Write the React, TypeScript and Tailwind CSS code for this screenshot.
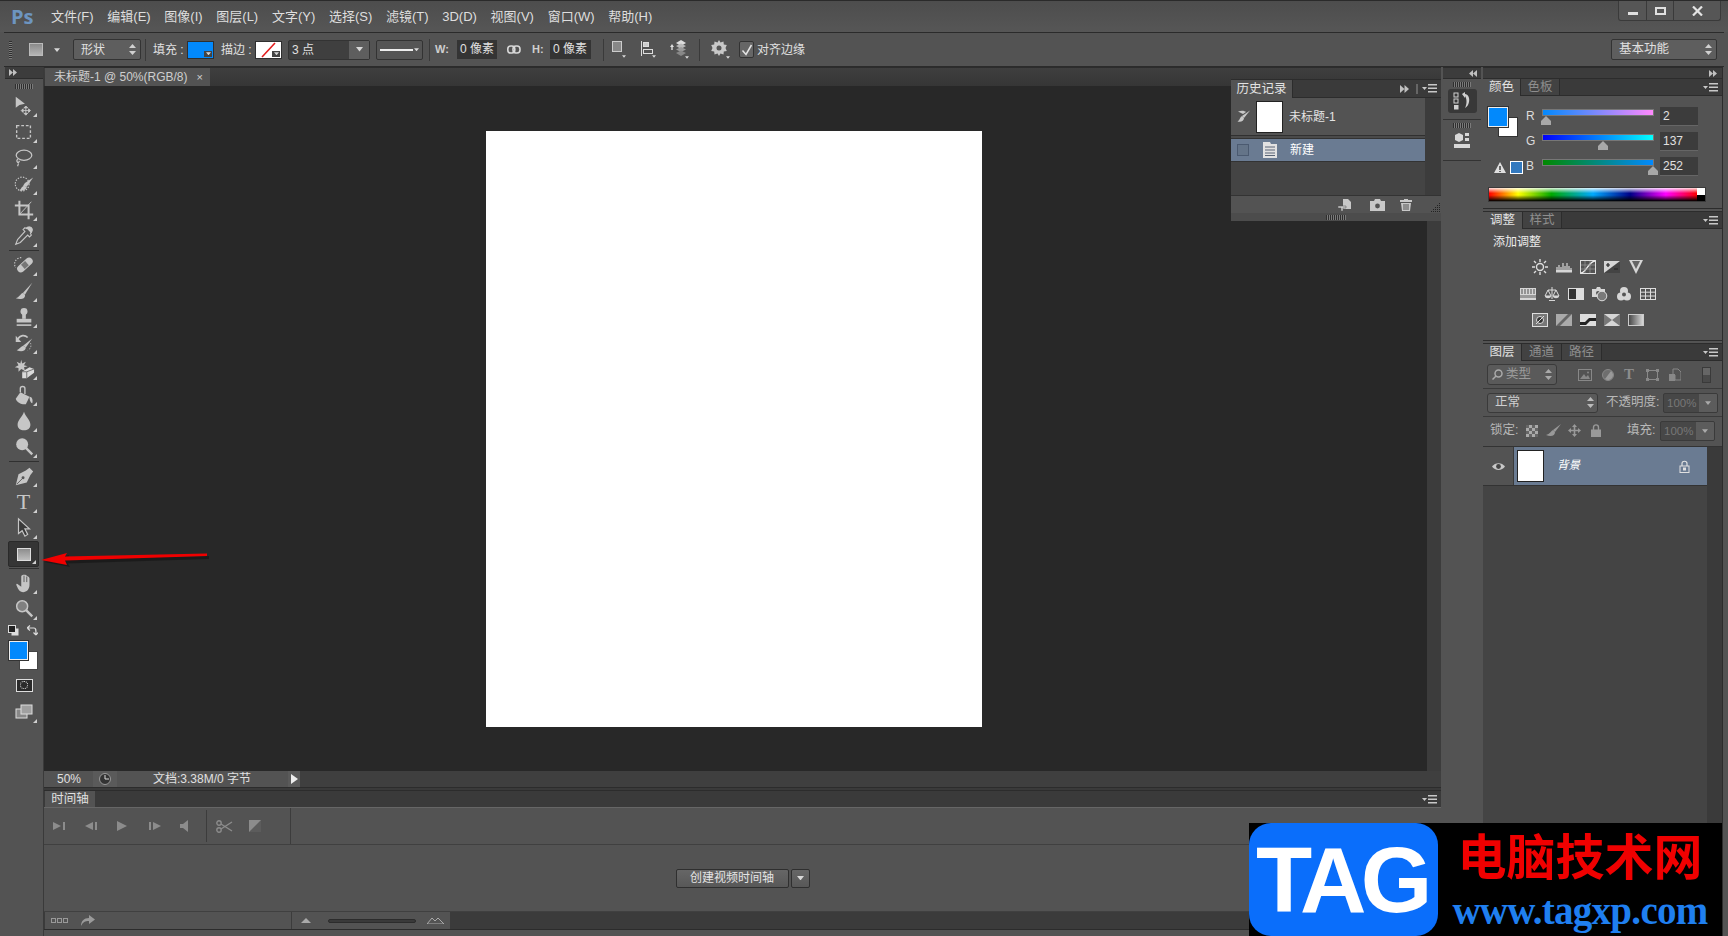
import React from "react";

const C = "#c6c6c6";

function Caret() {
  return <span className="absolute right-[2px] bottom-[2px] w-0 h-0 border-l-[4px] border-l-transparent border-b-[4px] border-b-[#d0d0d0]" />;
}

function Tool({ children, active, noCaret }: { children: React.ReactNode; active?: boolean; noCaret?: boolean }) {
  return (
    <div className={"relative mx-[3px] h-[26px] w-[31px] flex items-center justify-center rounded-[2px] " + (active ? "bg-[#353535] border border-[#2a2a2a]" : "")}>
      {children}
      {!noCaret && <Caret />}
    </div>
  );
}

function Ico({ children, s = 22, v = 24 }: { children: React.ReactNode; s?: number; v?: number }) {
  return (
    <svg width={s} height={s} viewBox={`0 0 ${v} ${v}`} fill={C} stroke="none">
      {children}
    </svg>
  );
}

function Sep() {
  return (
    <div className="h-[3px] flex items-center px-[4px]">
      <div className="h-px w-full bg-[#303030]" />
    </div>
  );
}

function Grip({ w = 22 }: { w?: number }) {
  return <div style={{ width: w }} className="h-[5px] bg-[repeating-linear-gradient(90deg,#2e2e2e_0_1px,#7a7a7a_1px_2px)]" />;
}

function UpDown({ c = "#d0d0d0" }: { c?: string }) {
  return (
    <svg width="7" height="11" viewBox="0 0 7 11" fill={c}>
      <path d="M3.5 0L7 4H0Z" />
      <path d="M3.5 11L0 7H7Z" />
    </svg>
  );
}

function Down({ c = "#d8d8d8", w = 7 }: { c?: string; w?: number }) {
  return (
    <svg width={w} height={w / 2 + 1} viewBox="0 0 8 5" fill={c}>
      <path d="M0 0H8L4 5Z" />
    </svg>
  );
}

function PanelMenu() {
  return (
    <svg width="15" height="9" viewBox="0 0 15 9" fill="#c8c8c8">
      <path d="M0 3H5L2.5 6Z" />
      <rect x="6" y="0" width="9" height="1.5" />
      <rect x="6" y="3.5" width="9" height="1.5" />
      <rect x="6" y="7" width="9" height="1.5" />
    </svg>
  );
}

function DoubleArrow({ left, s = 8 }: { left?: boolean; s?: number }) {
  return (
    <svg width={s} height={s - 1} viewBox="0 0 8 7" fill="#c0c0c0">
      {left ? <path d="M4 0V7L0 3.5ZM8 0V7L4 3.5Z" /> : <path d="M0 0V7L4 3.5ZM4 0V7L8 3.5Z" />}
    </svg>
  );
}

function Tabs({ tabs }: { tabs: [string, number][] }) {
  return (
    <div className="h-[17px] flex items-stretch bg-[#3a3a3a] border-b border-[#2c2c2c] shrink-0">
      {tabs.map(([t, w], i) => (
        <div
          key={t}
          style={{ width: w }}
          className={
            "flex items-center justify-center text-[12.5px] border-r border-[#2c2c2c] " +
            (i === 0 ? "bg-[#535353] text-[#e2e2e2] -mb-px" : "bg-[#424242] text-[#8e8e8e]")
          }
        >
          {t}
        </div>
      ))}
      <div className="flex-1 flex items-center justify-end pr-[4px]">
        <PanelMenu />
      </div>
    </div>
  );
}

function Slider({ label, grad, pos, value }: { label: string; grad: string; pos: number; value: string }) {
  return (
    <div className="h-[25px] flex items-start">
      <div className="w-[16px] pt-[1px] text-[12px] text-[#dcdcdc] leading-[16px]">{label}</div>
      <div className="relative w-[112px] mt-[2px]">
        <div className={"h-[7px] border border-[#777] " + grad} />
        <svg className="absolute top-[7px]" style={{ left: pos - 5 }} width="10" height="9" viewBox="0 0 10 9" fill="#a8a8a8">
          <path d="M5 0L10 5V9H0V5Z" />
        </svg>
      </div>
      <div className="ml-[6px] w-[38px] h-[19px] bg-[#3c3c3c] border-b border-[#666] text-[12px] text-[#e0e0e0] pl-[3px] leading-[19px]">{value}</div>
    </div>
  );
}

function Adj({ children }: { children: React.ReactNode }) {
  return (
    <svg width="16" height="16" viewBox="0 0 16 16" fill="#d6d6d6" stroke="none">
      {children}
    </svg>
  );
}

const boxBg = <rect x="0.5" y="1.5" width="15" height="13" fill="none" stroke="#dedede" />;

const TOP_TOOLS = [
  <Ico key="m"><path d="M3 2V14L7 11L13 9.5Z" /><path d="M14 13V21M10 17H18M14 12L16 14H12ZM14 22L16 20H12ZM9 17L11 15V19ZM19 17L17 15V19Z" stroke={C} strokeWidth="1" /></Ico>,
  <Ico key="mq"><rect x="4" y="5" width="15" height="14" fill="none" stroke={C} strokeWidth="1.5" strokeDasharray="3 2" /></Ico>,
  <Ico key="la"><ellipse cx="12" cy="9" rx="8.5" ry="5.5" fill="none" stroke={C} strokeWidth="1.4" /><path d="M5 13C3 16 6 19 7 15M6 18L5 21" fill="none" stroke={C} strokeWidth="1.3" /></Ico>,
  <Ico key="qs"><circle cx="10" cy="12" r="7.5" fill="none" stroke={C} strokeWidth="1.3" strokeDasharray="1.5 1.5" /><path d="M22 5L13 11L11 14L15 15Z" /><path d="M12 14C9 15 9 18 7 19C11 20 15 18 15 15Z" /></Ico>,
  <Ico key="cr"><path d="M7 2V17H22M2 7H17V22" fill="none" stroke={C} strokeWidth="2.2" /><path d="M7 17L20 3" stroke={C} strokeWidth="1" /></Ico>,
  <Ico key="ey"><path d="M20 3C18 1 16 3 15 4L13 3L11 5L13 7L5 16L3 21L8 19L16 11L18 13L20 11L19 9C20 8 22 5 20 3Z" fill="none" stroke={C} strokeWidth="1.2" /><path d="M14 3L20 9C22 6 22 4 20 3C18 1 16 1 14 3Z" /></Ico>,
];

const MID_TOOLS = [
  <Ico key="he"><g transform="rotate(-42 13 12)"><rect x="3" y="8" width="20" height="8" rx="4" /><rect x="10" y="9" width="6" height="6" fill="#777" /></g><path d="M9 4A7 7 0 0 0 3 15" fill="none" stroke={C} strokeWidth="1.2" strokeDasharray="1.5 1.5" /></Ico>,
  <Ico key="br"><path d="M21 3L11 14L13 16Z" /><path d="M11 14C8 15 7 19 3 20C9 22 14 20 13 16Z" /></Ico>,
  <Ico key="st"><circle cx="12" cy="6" r="3.8" /><rect x="10" y="8" width="4" height="6" /><rect x="4" y="14" width="16" height="4" /><rect x="4" y="20" width="16" height="1.7" /></Ico>,
  <Ico key="hb"><path d="M5 8C8 3 13 3 16 6" fill="none" stroke={C} strokeWidth="1.8" /><path d="M3 4V11H9Z" /><path d="M21 7L11 15L14 17Z" /><path d="M11 15C8 16 7 19 4 20C9 22 14 21 14 17Z" /><path d="M19 12A6 6 0 0 1 16 20" fill="none" stroke={C} strokeDasharray="1.5 1.5" /></Ico>,
  <Ico key="er"><path d="M9 2L10 6L14 4L12 8L16 9L12 10L13 14L9 12L6 15L6 11L2 10L6 8L4 4L8 6Z" /><path d="M10 15L18 10L23 12V16L15 22H10Z" fill="#dadada" /><path d="M10 15H15V22M15 15L23 12" fill="none" stroke="#6a6a6a" /></Ico>,
  <Ico key="bu"><path d="M8 9L18 14L14 22C10 23 4 20 3 16Z" /><path d="M8 9V5C8 2 13 2 13 5V11" fill="none" stroke={C} strokeWidth="1.5" /><path d="M18 14C21 14 22 18 21 21C19 21 18 17 18 14Z" /></Ico>,
  <Ico key="bl"><path d="M12 2C10 8 5 11 5 16C5 20 8 22 12 22C16 22 19 20 19 16C19 11 14 8 12 2Z" /></Ico>,
  <Ico key="do"><circle cx="10" cy="9" r="6.5" /><path d="M14 13L21 20" stroke={C} strokeWidth="2.6" /></Ico>,
];

const LOW_TOOLS = [
  <Ico key="pe"><path d="M18 3L22 7L19 11L15 19L3 22L6 10L14 6Z" /><circle cx="11" cy="14" r="1.6" fill="#555" /><path d="M4 21L11 14" stroke="#555" /></Ico>,
  <span key="t" className="font-['Liberation_Serif',serif] text-[22px] leading-none text-[#c6c6c6]">T</span>,
  <Ico key="pa"><path d="M6 2V18L10 15L13 21L16 19L13 13H18Z" fill="#3a3a3a" stroke={C} strokeWidth="1.3" /></Ico>,
];

function Toolbar() {
  return (
    <div className="w-[39px] ml-[5px] shrink-0 bg-[#535353] border-r border-[#3a3a3a] flex flex-col">
      <div className="h-[12px] bg-[#3c3c3c] border-b border-[#2c2c2c] flex items-center pl-[4px]">
        <DoubleArrow />
      </div>
      <div className="h-[14px] flex items-center justify-center">
        <Grip w={18} />
      </div>
      {TOP_TOOLS.map((t, i) => <Tool key={i} noCaret={false}>{t}</Tool>)}
      <Sep />
      {MID_TOOLS.map((t, i) => <Tool key={i}>{t}</Tool>)}
      <Sep />
      {LOW_TOOLS.map((t, i) => <Tool key={i}>{t}</Tool>)}
      <Tool active>
        <div className="w-[14px] h-[13px] border border-[#ddd] bg-[linear-gradient(180deg,#8d8d8d,#bdbdbd)]" />
      </Tool>
      <Sep />
      <Tool>
        <Ico><path d="M9 5V13M12 3V12M15 4V12M18 7V14C18 19 15 22 11 22C8 22 6 20 4 15C3 13 4 12 6 14L9 16V5C9 3 12 3 12 3C12 3 15 3 15 4C15 4 18 5 18 7Z" /><path d="M12 4V11M15 5V11" stroke="#555" /></Ico>
      </Tool>
      <Tool>
        <Ico><circle cx="10" cy="9" r="6" fill="#808080" stroke={C} strokeWidth="1.6" /><path d="M14 13L21 20" stroke={C} strokeWidth="2.6" /></Ico>
      </Tool>
      <div className="h-[17px] flex items-center gap-[8px] pl-[3px]">
        <svg width="11" height="11" viewBox="0 0 11 11"><rect x="3.5" y="3.5" width="7" height="7" fill="#ddd" /><rect x="0.5" y="0.5" width="7" height="7" fill="#222" stroke="#ddd" /></svg>
        <svg width="11" height="11" viewBox="0 0 11 11" fill="none" stroke="#ddd" strokeWidth="1.2"><path d="M1 3H7C9 3 9 5 9 9M0 3L3 0.5M0 3L3 5.5M9 10L6.5 7.5M9 10L11 7.5" /></svg>
      </div>
      <div className="relative h-[32px]">
        <div className="absolute left-[14px] top-[12px] w-[19px] h-[19px] bg-white border border-[#444]" />
        <div className="absolute left-[4px] top-[2px] w-[19px] h-[19px] bg-[#0289fc] border border-[#eee] outline outline-[#333]" />
      </div>
      <div className="h-[28px] flex items-center justify-center">
        <div className="w-[17px] h-[13px] border border-[#ddd] bg-[#2a2a2a] flex items-center justify-center">
          <div className="w-[8px] h-[8px] rounded-full border border-dotted border-[#eee]" />
        </div>
      </div>
      <Tool>
        <svg width="18" height="16" viewBox="0 0 18 16"><rect x="1" y="5" width="11" height="9" fill="#888" stroke="#ddd" /><rect x="6" y="1" width="11" height="9" fill="#a0a0a0" stroke="#ddd" /></svg>
      </Tool>
    </div>
  );
}

function OptSwatch({ red }: { red?: boolean }) {
  return (
    <div className={"relative w-[27px] h-[18px] border border-[#2f2f2f] " + (red ? "bg-white" : "bg-[#0289fc]")}>
      {red && (
        <svg className="absolute inset-0" width="25" height="16" viewBox="0 0 25 16">
          <path d="M6 15L19 1" stroke="#e21d1d" strokeWidth="1.6" />
        </svg>
      )}
      <span className="absolute right-[1px] bottom-[1px] flex items-center justify-center w-[8px] h-[6px] bg-[#444]">
        <Down w={5} />
      </span>
    </div>
  );
}

function OptionsBar() {
  return (
    <div className="h-[35px] mx-[4px] border-y border-[#2b2b2b] bg-[#535353] flex items-center text-[12px] text-[#e0e0e0] shrink-0">
      <div className="ml-[5px] w-[3px] h-[18px] bg-[repeating-linear-gradient(180deg,#2e2e2e_0_1px,#7a7a7a_1px_2px)]" />
      <div className="ml-[17px] w-[14px] h-[13px] border border-[#bbb] bg-[linear-gradient(180deg,#8a8a8a,#b5b5b5)]" />
      <div className="ml-[11px]"><Down w={6} /></div>
      <div className="ml-[13px] w-[68px] h-[21px] rounded-[2px] border border-[#333] bg-[#5e5e5e] flex items-center justify-between pl-[7px] pr-[4px]">
        <span className="text-[12px]">形状</span>
        <UpDown />
      </div>
      <div className="ml-[4px] w-px h-[22px] bg-[#3a3a3a]" />
      <span className="ml-[7px] w-[34px]">填充 :</span>
      <OptSwatch />
      <span className="ml-[7px] w-[34px]">描边 :</span>
      <OptSwatch red />
      <div className="ml-[6px] w-[82px] h-[20px] border border-[#333] bg-[#3f3f3f] flex items-center pl-[3px] rounded-[2px]">
        <span className="flex-1">3 点</span>
        <div className="w-[20px] h-full bg-[#5e5e5e] flex items-center justify-center"><Down /></div>
      </div>
      <div className="ml-[6px] w-[47px] h-[20px] border border-[#333] bg-[#555] rounded-[2px] flex items-center pl-[3px] pr-[3px] gap-[1px]">
        <div className="flex-1 h-[2px] bg-[#eee]" />
        <Down w={5} />
      </div>
      <div className="ml-[6px] w-px h-[22px] bg-[#3a3a3a]" />
      <span className="ml-[5px] w-[22px] text-[#cfcfcf] font-bold text-[11px]">W:</span>
      <div className="w-[40px] h-[19px] bg-[#343434] pl-[3px] leading-[19px]">0 像素</div>
      <svg className="ml-[10px]" width="14" height="9" viewBox="0 0 14 9" fill="none" stroke="#d8d8d8" strokeWidth="1.6">
        <rect x="0.8" y="1" width="7" height="7" rx="3" />
        <rect x="6" y="1" width="7" height="7" rx="3" />
      </svg>
      <span className="ml-[11px] w-[18px] text-[#cfcfcf] font-bold text-[11px]">H:</span>
      <div className="w-[41px] h-[19px] bg-[#343434] pl-[3px] leading-[19px]">0 像素</div>
      <div className="ml-[12px] w-px h-[22px] bg-[#3a3a3a]" />
      <div className="relative ml-[8px] w-[14px] h-[17px]">
        <div className="w-[10px] h-[11px] border border-[#ccc] bg-[#888]" />
        <div className="absolute right-0 bottom-0"><Down w={4} /></div>
      </div>
      <div className="relative ml-[15px] w-[15px] h-[17px]">
        <svg width="13" height="15" viewBox="0 0 13 15" fill="none" stroke="#ddd"><path d="M0.5 0V15" /><rect x="2.5" y="1.5" width="5" height="4" fill="#ccc" /><rect x="2.5" y="8.5" width="9" height="4" /></svg>
        <div className="absolute right-0 bottom-0"><Down w={4} /></div>
      </div>
      <div className="relative ml-[13px] w-[20px] h-[19px]">
        <svg width="18" height="18" viewBox="0 0 18 18" fill="#b8b8b8">
          <path d="M1 7L3 4L5 7H3.7V10H2.3V7Z" fill="#ddd" />
          <path d="M7 3L12 0L17 3L12 6Z" fill="#ddd" />
          <path d="M7 6L12 3.5L17 6L12 9Z" />
          <path d="M7 9.5L12 7L17 9.5L12 12Z" fill="#999" />
          <path d="M7 13L12 10.5L17 13L12 16Z" fill="#888" />
        </svg>
        <div className="absolute right-0 bottom-0"><Down w={4} /></div>
      </div>
      <div className="ml-[10px] w-px h-[22px] bg-[#3a3a3a]" />
      <div className="relative ml-[11px] w-[19px] h-[19px]">
        <svg width="16" height="16" viewBox="0 0 16 16" fill="#c8c8c8">
          <path d="M8 0L9.5 2.5L12.5 1.5L12.8 4.5L15.8 5L14.5 8L15.8 11L12.8 11.5L12.5 14.5L9.5 13.5L8 16L6.5 13.5L3.5 14.5L3.2 11.5L0.2 11L1.5 8L0.2 5L3.2 4.5L3.5 1.5L6.5 2.5Z" />
          <circle cx="8" cy="8" r="2.5" fill="#555" />
        </svg>
        <div className="absolute right-0 bottom-0"><Down w={4} /></div>
      </div>
      <div className="ml-[9px] w-[15px] h-[17px] border border-[#333] bg-[#666] rounded-[2px] flex items-center justify-center">
        <svg width="12" height="12" viewBox="0 0 12 12" fill="none" stroke="#e4e4e4" strokeWidth="1.5"><path d="M1.5 6.5L5 10.5L10.5 1" /></svg>
      </div>
      <span className="ml-[3px] text-[12px]">对齐边缘</span>
      <div className="ml-auto mr-[7px] w-[106px] h-[21px] rounded-[2px] border border-[#333] bg-[#5e5e5e] flex items-center justify-between pl-[7px] pr-[4px] text-[12.5px]">
        <span>基本功能</span>
        <UpDown />
      </div>
    </div>
  );
}

function MenuBar() {
  const items = ["文件(F)", "编辑(E)", "图像(I)", "图层(L)", "文字(Y)", "选择(S)", "滤镜(T)", "3D(D)", "视图(V)", "窗口(W)", "帮助(H)"];
  return (
    <div className="h-[32px] bg-[linear-gradient(180deg,#4d4d4d,#565656)] border-t border-[#2a2a2a] flex items-start shrink-0">
      <span className="ml-[11px] mt-[4px] w-[21px] text-[#6d95c0] font-bold text-[20px] leading-[24px] font-['Open_Sans',sans-serif]">Ps</span>
      <div className="ml-[19px] flex gap-[13.7px] mt-[7px] text-[13px] leading-[18px] text-[#dedede]">
        {items.map((m) => <span key={m}>{m}</span>)}
      </div>
      <div className="ml-auto mr-[7px] w-[103px] h-[20px] flex border border-t-0 border-[#3a3a3a] rounded-b-[3px] bg-[#565656]">
        <div className="w-[28px] flex items-center justify-center border-r border-[#3a3a3a]">
          <div className="w-[10px] h-[3px] mt-[6px] bg-[#e0e0e0]" />
        </div>
        <div className="w-[27px] flex items-center justify-center border-r border-[#3a3a3a]">
          <div className="w-[11px] h-[8px] border-2 border-[#e0e0e0]" />
        </div>
        <div className="flex-1 flex items-center justify-center">
          <svg width="11" height="10" viewBox="0 0 11 10" stroke="#e4e4e4" strokeWidth="2.2"><path d="M1 0.5L10 9.5M10 0.5L1 9.5" /></svg>
        </div>
      </div>
    </div>
  );
}

function HistoryPanel() {
  return (
    <div className="absolute right-0 top-[12px] w-[210px] h-[142px] flex flex-col bg-[#535353] border-t border-[#2c2c2c] z-10">
      <div className="h-[18px] bg-[#3a3a3a] border-b border-[#2c2c2c] flex items-stretch shrink-0">
        <div className="w-[62px] bg-[#535353] -mb-px border-r border-[#2c2c2c] text-[12.5px] text-[#e2e2e2] flex items-center justify-center">历史记录</div>
        <div className="flex-1 flex items-center justify-end pr-[4px]">
          <DoubleArrow s={9} />
          <div className="ml-[7px] w-[2px] h-[10px] bg-[#666]" />
          <div className="ml-[4px]"><PanelMenu /></div>
        </div>
      </div>
      <div className="flex-1 flex min-h-0">
        <div className="flex-1 flex flex-col">
          <div className="h-[38px] flex items-center border-b border-[#303030] text-[12px] text-[#e4e4e4]">
            <svg className="ml-[6px]" width="14" height="13" viewBox="0 0 14 13" fill="#c8c8c8">
              <path d="M13 0.5L5 6L7 8Z" /><path d="M1 1.5C5 0 8 1 9 2L6 4ZM5 6C3 7 3 10 0.5 11.5C4 12.5 7 11 7 8Z" />
            </svg>
            <div className="ml-[5px] w-[27px] h-[32px] bg-white border border-[#222]" />
            <span className="ml-[6px]">未标题-1</span>
          </div>
          <div className="h-[3px] bg-[#4a4a4a] border-b border-[#333]" />
          <div className="h-[23px] bg-[#6a7b92] border-b border-[#333] flex items-center text-[12px] text-white">
            <div className="ml-[6px] w-[12px] h-[12px] border border-[#4b5a70] bg-[#647488]" />
            <svg className="ml-[14px]" width="14" height="16" viewBox="0 0 14 16" fill="#e2e2e2">
              <path d="M0 0H7L8 2H14V16H0Z" />
              <path d="M2 5H12M2 8H12M2 11H12M2 13.5H12" stroke="#5a6576" />
            </svg>
            <span className="ml-[13px]">新建</span>
          </div>
          <div className="flex-1 bg-[#444]" />
        </div>
        <div className="w-[16px] bg-[#3c3c3c]" />
      </div>
      <div className="relative h-[18px] bg-[#535353] border-t border-[#333] flex items-center justify-end shrink-0">
        <svg width="14" height="12" viewBox="0 0 14 12" fill="#c8c8c8"><path d="M5 0H10L13 3V10H5Z" /><path d="M0 7H8V9H5V12H3V9H0Z" stroke="#535353" strokeWidth="0.5" /></svg>
        <svg className="ml-[18px]" width="15" height="12" viewBox="0 0 15 12" fill="#c8c8c8"><path d="M0 2H4L5 0H10L11 2H15V12H0Z" /><circle cx="7.5" cy="7" r="2.4" fill="#535353" /></svg>
        <svg className="ml-[15px] mr-[29px]" width="12" height="12" viewBox="0 0 12 12" fill="#c8c8c8"><path d="M4 0H8V1H12V3H0V1H4Z" /><path d="M1 4H11L10 12H2Z" /><path d="M4 5V11M6 5V11M8 5V11" stroke="#535353" /></svg>
        <svg className="absolute right-[1px] bottom-[1px]" width="9" height="9" viewBox="0 0 9 9" fill="#222"><path d="M8 0h1v1H8zM6 2h1v1H6zM8 2h1v1H8zM4 4h1v1H4zM6 4h1v1H6zM8 4h1v1H8zM2 6h1v1H2zM4 6h1v1H4zM6 6h1v1H6zM8 6h1v1H8zM0 8h1v1H0zM2 8h1v1H2zM4 8h1v1H4zM6 8h1v1H6zM8 8h1v1H8z" /></svg>
      </div>
      <div className="h-[8px] bg-[#4c4c4c] flex items-center justify-center shrink-0"><Grip w={20} /></div>
    </div>
  );
}

function Center() {
  return (
    <div className="relative w-[1397px] pb-[6px] flex flex-col shrink-0">
      <div className="h-[19px] bg-[linear-gradient(180deg,#3f3f3f,#363636)] border-t border-[#2c2c2c] flex shrink-0">
        <div className="ml-px w-[165px] bg-[#535353] flex items-center text-[12px] text-[#cfcfcf] pl-[9px]">
          <span className="flex-1">未标题-1 @ 50%(RGB/8)</span>
          <span className="mr-[7px] text-[11px] leading-none">×</span>
        </div>
      </div>
      <div className="flex-1 flex min-h-0">
        <div className="flex-1 bg-[#282828] flex items-center justify-center pr-[3px]">
          <div className="w-[496px] h-[596px] bg-white" />
        </div>
        <div className="w-[14px] bg-[#3c3c3c]" />
      </div>
      <div className="h-[17px] flex bg-[#3f3f3f] border-b border-[#2c2c2c] text-[12px] text-[#e0e0e0] shrink-0">
        <div className="w-[49px] bg-[#535353] flex items-center pl-[13px]">50%</div>
        <div className="w-[24px] bg-[#5a5a5a] flex items-center justify-center">
          <svg width="12" height="12" viewBox="0 0 12 12"><circle cx="6" cy="6" r="5.5" fill="#333" stroke="#999" /><path d="M6 2V6H10" fill="none" stroke="#ddd" /></svg>
        </div>
        <div className="w-[171px] bg-[#535353] flex items-center pl-[36px]">文档:3.38M/0 字节</div>
        <div className="w-[12px] bg-[#5a5a5a] flex items-center justify-center">
          <svg width="7" height="10" viewBox="0 0 7 10" fill="#eee"><path d="M0 0L7 5L0 10Z" /></svg>
        </div>
      </div>
      <div className="h-[2px] bg-[#3a3a3a] shrink-0" />
      <div className="h-[17px] flex bg-[#3a3a3a] border-t border-[#2c2c2c] shrink-0">
        <div className="ml-px w-[50px] bg-[#535353] text-[12.5px] text-[#e0e0e0] flex items-center justify-center">时间轴</div>
        <div className="flex-1 flex items-center justify-end pr-[4px]"><PanelMenu /></div>
      </div>
      <div className="h-[37px] bg-[#535353] border-t border-[#666] flex items-center shrink-0">
        <svg className="ml-[9px]" width="12" height="10" viewBox="0 0 12 10" fill="#8c8c8c"><path d="M0 1L8 5L0 9ZM10 1H12V9H10Z" /></svg>
        <svg className="ml-[20px]" width="12" height="10" viewBox="0 0 12 10" fill="#8c8c8c"><path d="M8 1L0 5L8 9ZM10 1H12V9H10Z" /></svg>
        <svg className="ml-[20px]" width="10" height="10" viewBox="0 0 10 10" fill="#8c8c8c"><path d="M0 0L10 5L0 10Z" /></svg>
        <svg className="ml-[22px]" width="12" height="10" viewBox="0 0 12 10" fill="#8c8c8c"><path d="M0 1H2V9H0ZM4 1L12 5L4 9Z" /></svg>
        <svg className="ml-[19px]" width="8" height="12" viewBox="0 0 8 12" fill="#8c8c8c"><path d="M0 4H3L8 0V12L3 8H0Z" /></svg>
        <div className="ml-[18px] w-px h-[32px] bg-[#3c3c3c]" />
        <svg className="ml-[9px]" width="17" height="13" viewBox="0 0 17 13" fill="none" stroke="#8c8c8c" strokeWidth="1.4"><circle cx="3" cy="3" r="2.2" /><circle cx="3" cy="10" r="2.2" /><path d="M5 4L16 11M5 9L16 2" /></svg>
        <svg className="ml-[16px]" width="12" height="12" viewBox="0 0 12 12"><rect width="12" height="12" fill="#8c8c8c" /><path d="M12 0V12H0Z" fill="#5c5c5c" /></svg>
        <div className="ml-[29px] w-px h-[37px] bg-[#3c3c3c]" />
      </div>
      <div className="h-[67px] bg-[#535353] border-t border-[#404040] flex items-center justify-center gap-[2px] shrink-0">
        <div className="w-[113px] h-[19px] bg-[linear-gradient(180deg,#666,#585858)] border border-[#2f2f2f] rounded-[2px] text-[12px] leading-[17px] text-center text-[#e4e4e4]">创建视频时间轴</div>
        <div className="w-[19px] h-[19px] bg-[linear-gradient(180deg,#666,#585858)] border border-[#2f2f2f] rounded-[2px] flex items-center justify-center"><Down /></div>
      </div>
      <div className="h-[19px] bg-[#3b3b3b] border-t border-[#404040] border-b border-b-[#2c2c2c] flex shrink-0">
        <div className="w-[247px] ml-px bg-[#535353] flex items-center border-r border-[#3c3c3c]">
          <div className="ml-[6px] flex gap-px">
            <div className="w-[5px] h-[5px] border border-[#999]" />
            <div className="w-[5px] h-[5px] border border-[#999]" />
            <div className="w-[5px] h-[5px] border border-[#999]" />
          </div>
          <svg className="ml-[13px]" width="14" height="11" viewBox="0 0 14 11" fill="#9a9a9a"><path d="M8 0L14 4.5L8 9V6C4 6 2 7 0 11C0 6 3 3 8 3Z" /></svg>
        </div>
        <div className="w-[158px] bg-[#535353] flex items-center">
          <svg className="ml-[9px]" width="10" height="5" viewBox="0 0 10 5" fill="#aaa"><path d="M0 5L5 0L10 5Z" /></svg>
          <div className="ml-[17px] w-[88px] h-[4px] rounded-full bg-[#3a3a3a] border border-[#2c2c2c]" />
          <svg className="ml-[11px]" width="17" height="7" viewBox="0 0 17 7" fill="none" stroke="#aaa"><path d="M0 7L5 1L8 4L11 1L17 7Z" /></svg>
        </div>
      </div>
      <HistoryPanel />
    </div>
  );
}

function MidDock() {
  return (
    <div className="w-[38px] ml-[2px] shrink-0 flex flex-col bg-[#535353]">
      <div className="h-[12px] bg-[#3c3c3c] border-b border-[#2c2c2c] border-t border-t-[#2c2c2c] flex items-center justify-end pr-[4px]"><DoubleArrow left /></div>
      <div className="h-[41px] border-b border-[#333] flex flex-col items-center">
        <div className="h-[10px] flex items-center"><Grip w={18} /></div>
        <div className="w-[29px] h-[24px] rounded-[3px] bg-[#383838] flex items-center justify-center">
          <svg width="18" height="18" viewBox="0 0 18 18" fill="#d0d0d0">
            <rect x="1" y="1" width="4" height="4" fill="none" stroke="#d0d0d0" />
            <rect x="1" y="7" width="4" height="4" fill="none" stroke="#d0d0d0" />
            <rect x="1" y="13" width="4.5" height="4.5" />
            <path d="M9 2L12 0V2C15 2 17 6 16 10C15.5 13 14 15 12 16C14 12 14 7 12 4V6Z" />
          </svg>
        </div>
      </div>
      <div className="h-[41px] border-b border-[#333] flex flex-col items-center">
        <div className="h-[10px] flex items-center"><Grip w={18} /></div>
        <svg className="mt-[2px]" width="16" height="18" viewBox="0 0 16 18" fill="#d8d8d8">
          <path d="M1 3L5 1L9 3V8L5 10L1 8Z" />
          <rect x="11" y="1" width="4" height="3" />
          <rect x="11" y="6" width="4" height="3" />
          <rect x="0" y="12" width="16" height="4" />
        </svg>
      </div>
    </div>
  );
}

function ColorPanel() {
  return (
    <div className="h-[130px] border-b border-[#2c2c2c] flex flex-col shrink-0">
      <Tabs tabs={[["颜色", 38], ["色板", 39]]} />
      <div className="flex pl-[5px] pt-[11px]">
        <div className="w-[38px] relative">
          <div className="absolute left-[10px] top-[10px] w-[20px] h-[20px] bg-white border border-[#333]" />
          <div className="absolute left-0 top-0 w-[20px] h-[20px] bg-[#0289fc] border border-[#eee] outline outline-[#333]" />
          <svg className="absolute left-[6px] top-[55px]" width="12" height="11" viewBox="0 0 12 11" fill="#e0e0e0"><path d="M6 0L12 11H0Z" /><path d="M6 4V8M6 9V10" stroke="#333" strokeWidth="1.4" /></svg>
          <div className="absolute left-[22px] top-[54px] w-[13px] h-[13px] bg-[#3279bf] border border-white" />
        </div>
        <div>
          <Slider label="R" grad="bg-[linear-gradient(90deg,#0289fc,#ff89fc)]" pos={4} value="2" />
          <Slider label="G" grad="bg-[linear-gradient(90deg,#0200fc,#02fffc)]" pos={61} value="137" />
          <Slider label="B" grad="bg-[linear-gradient(90deg,#028900,#0289ff)]" pos={111} value="252" />
        </div>
      </div>
      <div className="ml-[5px] mt-[5px] w-[218px] h-[15px] border border-[#3a3a3a] flex">
        <div className="flex-1 bg-[linear-gradient(180deg,#ffffffdd,#ffffff00_40%,#00000000_55%,#000),linear-gradient(90deg,#f00,#ff0_14%,#0a0_30%,#0af_50%,#008_68%,#f0f_85%,#f00)]" />
        <div className="w-[8px] flex flex-col">
          <div className="flex-1 bg-white" />
          <div className="flex-1 bg-black" />
        </div>
      </div>
    </div>
  );
}

function AdjPanel() {
  return (
    <div className="mt-[2px] h-[130px] border-t border-b border-[#2c2c2c] flex flex-col shrink-0">
      <Tabs tabs={[["调整", 40], ["样式", 39]]} />
      <div className="pl-[10px] pt-[4px] h-[26px] text-[12px] text-[#ececec]">添加调整</div>
      <div className="flex flex-col items-center gap-[10.5px] pr-[30px] pt-[4px]">
        <div className="flex gap-[8px]">
          <Adj><circle cx="8" cy="8" r="3.5" fill="none" stroke="#ddd" strokeWidth="1.4" /><path d="M8 0V3M8 13V16M0 8H3M13 8H16M2 2L4 4M12 12L14 14M2 14L4 12M12 4L14 2" stroke="#ddd" strokeWidth="1.4" /></Adj>
          <Adj><rect y="11" width="16" height="2.5" /><path d="M1 11V8M3 11V6M5 11V8M7 11V4M9 11V7M11 11V4M13 11V7M15 11V9" stroke="#d6d6d6" strokeWidth="1.2" /></Adj>
          <Adj>{boxBg}<path d="M1 14C6 14 9 2 15 2" fill="none" stroke="#eee" strokeWidth="1.4" /><path d="M5 2V14M10 2V14M1 6H15M1 10H15" stroke="#999" strokeWidth="0.7" /></Adj>
          <Adj><rect y="2" width="16" height="12" fill="#d6d6d6" /><path d="M16 2L0 14H16Z" fill="#444" /><path d="M2 6H6M4 4V8M10 10H14" stroke="#222" strokeWidth="1.2" /></Adj>
          <Adj><path d="M1 1H15L8 15Z" /><path d="M4 2H12L8 10Z" fill="#666" /></Adj>
        </div>
        <div className="flex gap-[8px]">
          <Adj><rect y="2" width="16" height="12" /><path d="M2 3V8M5 3V8M8 3V8M11 3V8M14 3V8" stroke="#777" strokeWidth="1.4" /><rect y="9" width="16" height="3" fill="#999" /></Adj>
          <Adj><path d="M8 1V13M4 4H12M4 4L1 10H7ZM12 4L9 10H15Z" fill="none" stroke="#ddd" /><path d="M1 10C1 13 7 13 7 10ZM9 10C9 13 15 13 15 10ZM5 14H11V15H5Z" /></Adj>
          <Adj><rect x="0.5" y="2.5" width="15" height="11" fill="#333" stroke="#ddd" /><rect x="8" y="3" width="7" height="10" fill="#ddd" /></Adj>
          <Adj><path d="M0 3H4L5 1H8L9 3H13V11H0Z" /><circle cx="6" cy="7" r="2" fill="#555" /><circle cx="10" cy="10" r="4.8" fill="#7a7a7a" stroke="#ddd" /></Adj>
          <Adj><circle cx="8" cy="5" r="4" /><circle cx="5" cy="10.5" r="4" /><circle cx="11" cy="10.5" r="4" /><circle cx="8" cy="8.5" r="2" fill="#555" /></Adj>
          <Adj><rect x="0.5" y="2.5" width="15" height="11" fill="none" stroke="#ddd" /><path d="M5.5 3V13M10.5 3V13M1 6.2H15M1 10H15" stroke="#ddd" /></Adj>
        </div>
        <div className="flex gap-[8px]">
          <Adj>{boxBg}<rect x="1" y="2" width="14" height="12" fill="#777" /><circle cx="8" cy="8" r="3.5" fill="#333" stroke="#ddd" /><path d="M4 12L12 4" stroke="#ddd" /></Adj>
          <Adj><rect y="2" width="16" height="12" fill="#aaa" /><path d="M0 14L12 2H16L4 14Z" fill="#666" /></Adj>
          <Adj><rect y="2" width="16" height="12" fill="#ddd" /><path d="M0 10L5 10L9 6H16V9H10L6 13H0Z" fill="#222" /></Adj>
          <Adj><rect y="2" width="16" height="12" /><path d="M0 2L8 8L0 14ZM16 2L8 8L16 14Z" fill="#777" /></Adj>
          <Adj><rect x="0.5" y="2.5" width="15" height="11" fill="url(#gg)" stroke="#ccc" /><defs><linearGradient id="gg"><stop offset="0" stopColor="#444" /><stop offset="1" stopColor="#ddd" /></linearGradient></defs></Adj>
        </div>
      </div>
    </div>
  );
}

function SmallDrop({ w, label }: { w: number; label: string }) {
  return (
    <div style={{ width: w }} className="h-[20px] rounded-[3px] border border-[#3a3a3a] bg-[#5a5a5a] flex items-center justify-between pl-[7px] pr-[3px] text-[12.5px] text-[#cfcfcf]">
      <span>{label}</span>
      <UpDown c="#bbb" />
    </div>
  );
}

function PctBox() {
  return (
    <div className="w-[55px] h-[20px] flex rounded-[2px] border border-[#3a3a3a] bg-[#474747] overflow-hidden">
      <span className="flex-1 pl-[3px] text-[11.5px] text-[#777] leading-[18px]">100%</span>
      <div className="w-[18px] bg-[#5c5c5c] flex items-center justify-center"><Down c="#aaa" w={6} /></div>
    </div>
  );
}

function LayersPanel() {
  return (
    <div className="mt-[2px] flex-1 border-t border-[#2c2c2c] flex flex-col min-h-0">
      <Tabs tabs={[["图层", 39], ["通道", 40], ["路径", 40]]} />
      <div className="h-[28px] border-b border-[#3a3a3a] flex items-center pl-[4px] shrink-0">
        <div className="w-[70px] h-[21px] rounded-[3px] border border-[#3a3a3a] bg-[#5a5a5a] flex items-center px-[4px] text-[12.5px] text-[#9a9a9a]">
          <svg width="11" height="11" viewBox="0 0 11 11" fill="none" stroke="#aaa" strokeWidth="1.5"><circle cx="6.5" cy="4.5" r="3.5" /><path d="M4 7L0.5 10.5" /></svg>
          <span className="ml-[3px] flex-1">类型</span>
          <UpDown c="#aaa" />
        </div>
        <div className="ml-[21px] flex items-center gap-[10px] text-[#999]">
          <svg width="14" height="12" viewBox="0 0 14 12" fill="#888"><rect x="0.5" y="0.5" width="13" height="11" fill="none" stroke="#888" /><path d="M2 10L6 5L8 8L10 6L12 10Z" /><circle cx="10" cy="3.5" r="1" /></svg>
          <svg width="12" height="12" viewBox="0 0 12 12"><circle cx="6" cy="6" r="5.5" fill="#6e6e6e" stroke="#888" /><path d="M9 2A5 5 0 0 1 3 10Z" fill="#999" /></svg>
          <span className="w-[12px] font-['Liberation_Serif',serif] font-bold text-[15px] leading-none text-[#8c8c8c]">T</span>
          <svg width="13" height="12" viewBox="0 0 13 12" fill="#888"><rect x="1.5" y="1.5" width="10" height="9" fill="none" stroke="#888" /><rect width="3" height="3" /><rect x="10" width="3" height="3" /><rect y="9" width="3" height="3" /><rect x="10" y="9" width="3" height="3" /></svg>
          <svg width="12" height="13" viewBox="0 0 12 13" fill="#888"><path d="M4 1H9L12 4V12H6V7H4Z" fill="none" stroke="#888" /><rect y="6" width="6" height="7" /></svg>
        </div>
        <div className="ml-[21px] w-[9px] h-[16px] border border-[#3a3a3a] flex flex-col">
          <div className="flex-1 bg-[#666]" />
          <div className="flex-1 bg-[#4a4a4a]" />
        </div>
      </div>
      <div className="h-[28px] border-b border-[#3a3a3a] flex items-center pl-[4px] shrink-0">
        <SmallDrop w={111} label="正常" />
        <span className="ml-[8px] w-[57px] text-[12.5px] text-[#b8b8b8]">不透明度:</span>
        <PctBox />
      </div>
      <div className="h-[30px] border-b border-[#333] flex items-center pl-[7px] pb-[2px] shrink-0 text-[12.5px] text-[#b8b8b8]">
        <span className="w-[36px]">锁定:</span>
        <div className="w-[12px] h-[12px] bg-[repeating-conic-gradient(#aaa_0_25%,#666_0_50%)] bg-[length:6px_6px]" />
        <svg className="ml-[8px]" width="15" height="13" viewBox="0 0 15 13" fill="#999"><path d="M15 0L7 6L9 8Z" /><path d="M7 6C5 7 4 10 0 11C5 13 9 12 9 8Z" /></svg>
        <svg className="ml-[7px]" width="13" height="13" viewBox="0 0 13 13" fill="#999"><path d="M6.5 0L9 3H7.3V5.7H10V4L13 6.5L10 9V7.3H7.3V10H9L6.5 13L4 10H5.7V7.3H3V9L0 6.5L3 4V5.7H5.7V3H4Z" /></svg>
        <svg className="ml-[10px]" width="10" height="13" viewBox="0 0 10 13" fill="#999"><path d="M2.5 6V3.5C2.5 0 7.5 0 7.5 3.5V6" fill="none" stroke="#999" strokeWidth="1.4" /><rect y="5.5" width="10" height="7.5" /></svg>
        <span className="ml-[26px] w-[33px]">填充:</span>
        <PctBox />
      </div>
      <div className="flex-1 flex bg-[#444] min-h-0">
        <div className="flex-1">
          <div className="h-[39px] flex border-b border-[#333]">
            <div className="w-[31px] bg-[#535353] border-r border-[#3a3a3a] flex items-center justify-center">
              <svg width="13" height="9" viewBox="0 0 13 9"><path d="M0 4.5C3 0 10 0 13 4.5C10 9 3 9 0 4.5Z" fill="#c8c8c8" /><circle cx="6.5" cy="4.5" r="2.4" fill="#444" /></svg>
            </div>
            <div className="flex-1 bg-[#6a7b92] flex items-center">
              <div className="ml-[3px] w-[27px] h-[32px] bg-white border border-[#222]" />
              <span className="ml-[13px] text-[11.5px] italic text-white">背景</span>
              <svg className="ml-auto mr-[17px]" width="11" height="13" viewBox="0 0 11 13" fill="none" stroke="#e0e0e0"><path d="M3 6V3.5C3 0.5 8 0.5 8 3.5V6" strokeWidth="1.2" /><rect x="1" y="6" width="9" height="6.5" /><rect x="4.5" y="8" width="2" height="2" fill="#e0e0e0" /></svg>
            </div>
          </div>
        </div>
        <div className="w-[15px] bg-[#3a3a3a]" />
      </div>
    </div>
  );
}

function RightDock() {
  return (
    <div className="w-[240px] ml-[2px] shrink-0 flex flex-col bg-[#535353] border-r border-[#2c2c2c]">
      <div className="h-[12px] bg-[#3c3c3c] border-y border-[#2c2c2c] shrink-0 flex items-center justify-end pr-[5px]"><DoubleArrow /></div>
      <ColorPanel />
      <AdjPanel />
      <LayersPanel />
    </div>
  );
}

function RedArrow() {
  return (
    <svg className="absolute left-[41px] top-[548px] z-20" width="172" height="20" viewBox="0 0 172 20">
      <path d="M1 12L26 5L25 8.5L166 6L166 9L25 13.5L27 17Z" fill="#000" opacity="0.3" transform="translate(2 2)" />
      <path d="M0 12L26 5L24 8.5L166 5.5L166 8L24 12.5L26 17Z" fill="#f00000" />
    </svg>
  );
}

function Watermark() {
  return (
    <div className="absolute right-[6px] bottom-0 w-[473px] h-[113px] bg-black flex z-30">
      <div className="w-[189px] h-[113px] bg-[#0a6efb] rounded-[22px] flex items-center justify-center">
        <span className="text-white font-bold text-[92px] leading-[100px] tracking-[-5.5px] pr-[4px] font-['Liberation_Sans',sans-serif]">TAG</span>
      </div>
      <div className="flex-1 flex flex-col items-center">
        <div className="h-[68px] text-[#f00000] text-[49px] leading-[62px] font-bold whitespace-nowrap font-['Noto_Sans_CJK_SC',sans-serif]">电脑技术网</div>
        <div className="text-[#1f7ff0] text-[39px] leading-[40px] tracking-[-0.7px] font-bold font-['Liberation_Serif',serif]">www.tagxp.com</div>
      </div>
    </div>
  );
}

export default function App() {
  return (
    <div className="relative w-[1728px] h-[936px] overflow-hidden bg-[#535353] flex flex-col font-['Liberation_Sans','Noto_Sans_CJK_SC',sans-serif]">
      <MenuBar />
      <OptionsBar />
      <div className="flex-1 flex min-h-0">
        <Toolbar />
        <Center />
        <MidDock />
        <RightDock />
      </div>
      <RedArrow />
      <Watermark />
    </div>
  );
}
